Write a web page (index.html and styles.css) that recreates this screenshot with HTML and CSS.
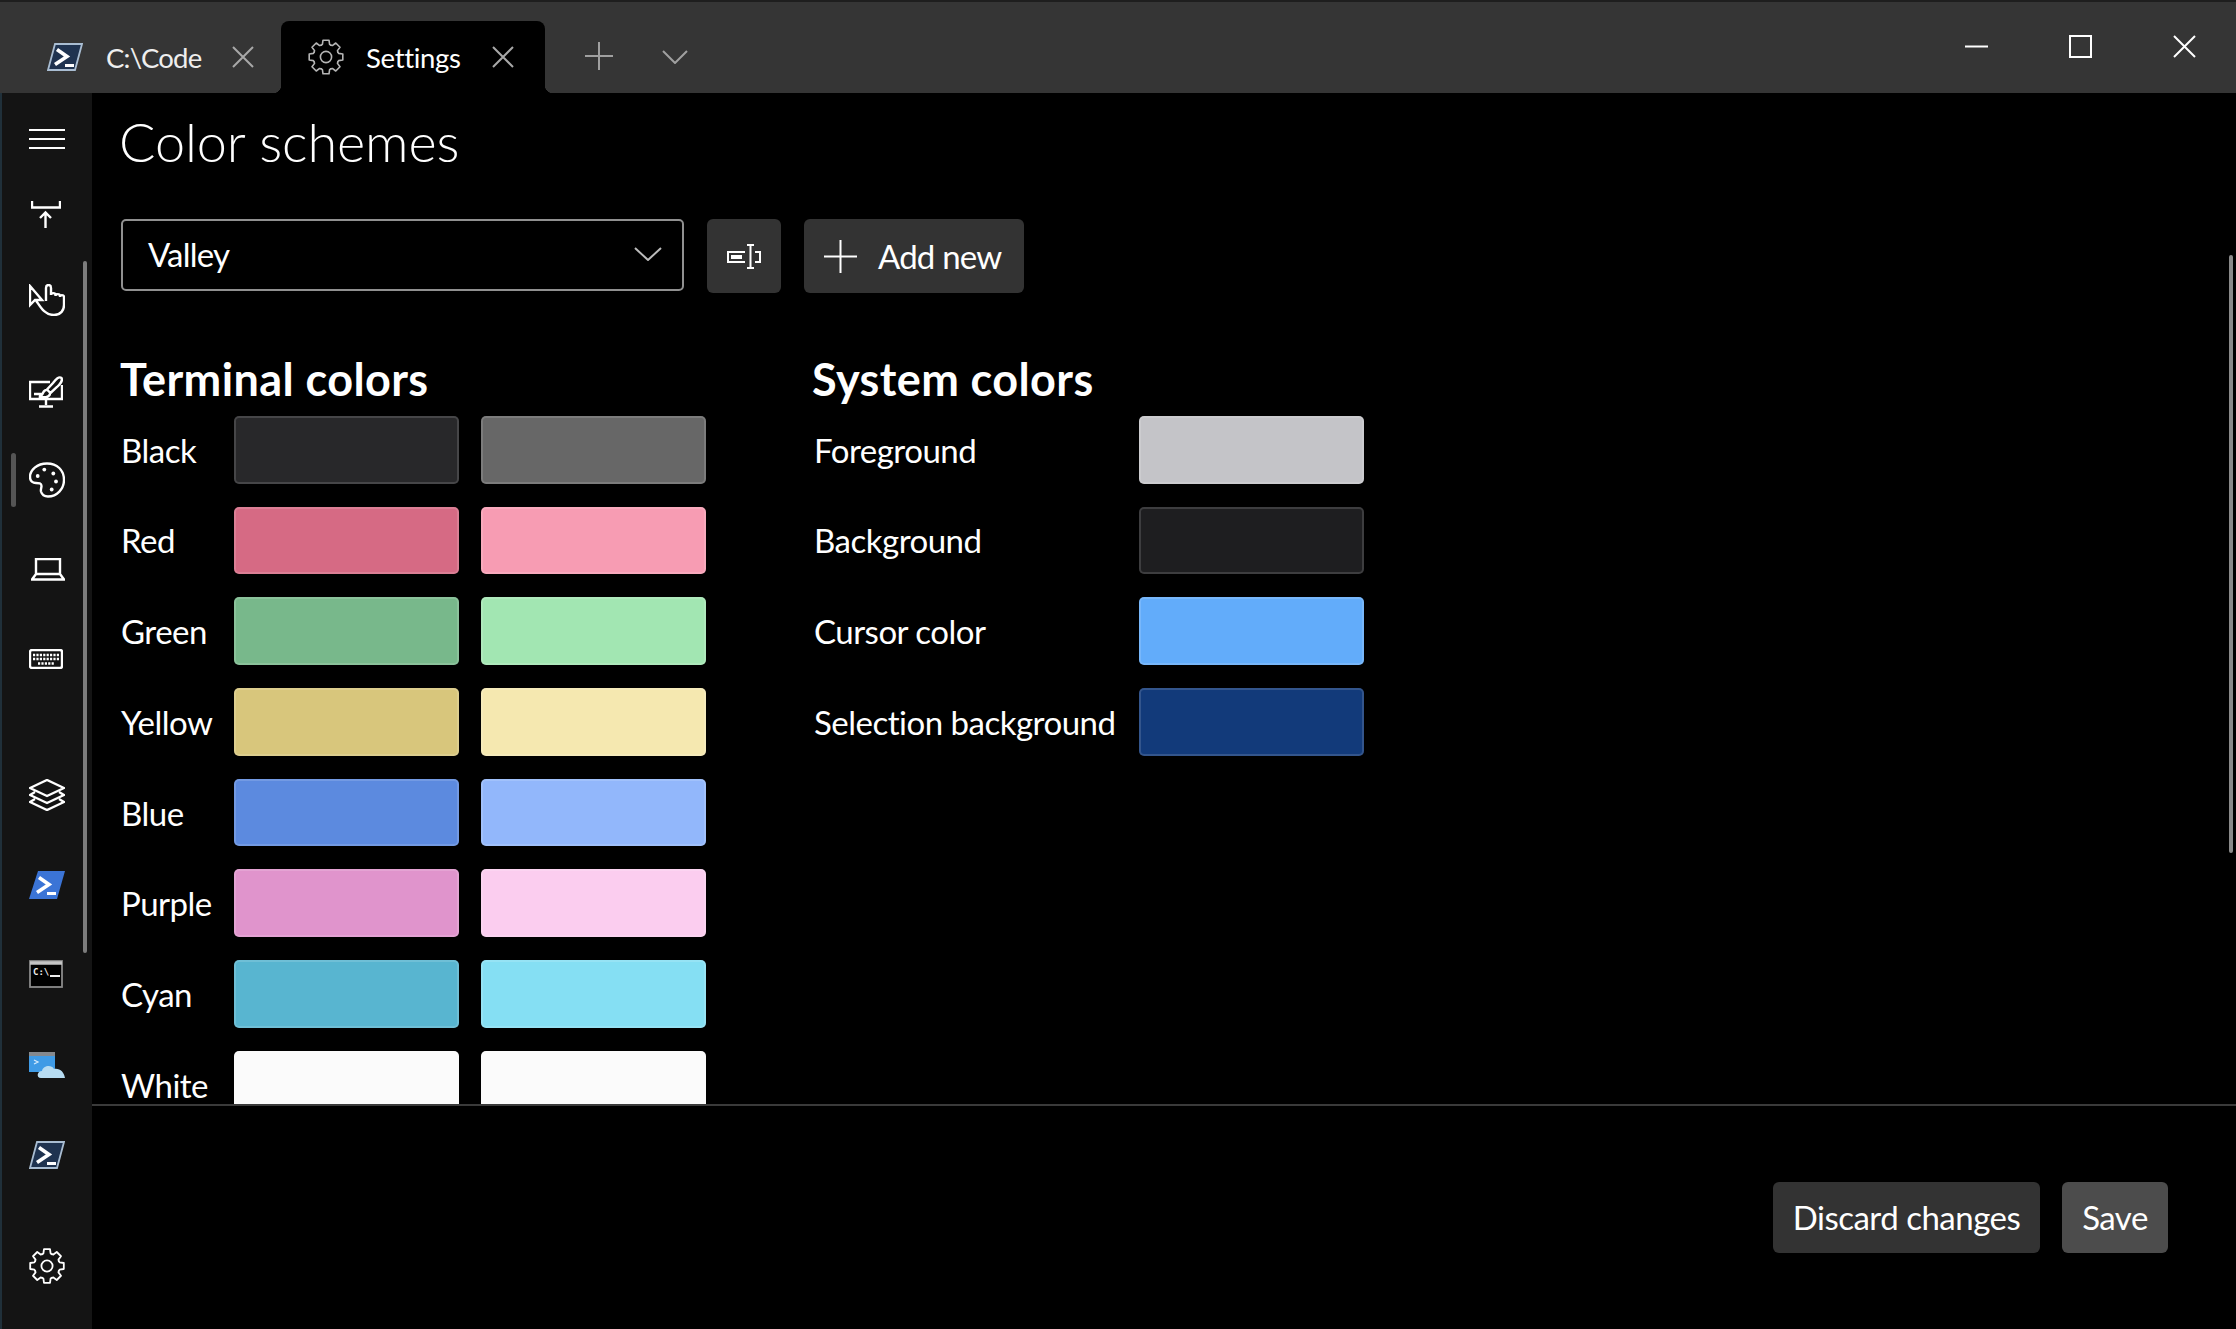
FILE: index.html
```html
<!DOCTYPE html>
<html lang="en">
<head>
    <meta charset="UTF-8">
    <title>Settings</title>
    <link rel="stylesheet" href="styles.css">
</head>
<body>
    <svg class="defs" width="0" height="0">
        <defs>
            <g id="tooth">
                <path d="M-4.9 -11.8 L-3.6 -12.6 L-3 -16.8 L3 -16.8 L3.6 -12.6 L4.9 -11.8"/>
            </g>
            <g id="gear" fill="none" stroke-linejoin="round" stroke-linecap="round">
                <g transform="translate(18 18)">
                    <use href="#tooth"/>
                    <use href="#tooth" transform="rotate(45)"/>
                    <use href="#tooth" transform="rotate(90)"/>
                    <use href="#tooth" transform="rotate(135)"/>
                    <use href="#tooth" transform="rotate(180)"/>
                    <use href="#tooth" transform="rotate(225)"/>
                    <use href="#tooth" transform="rotate(270)"/>
                    <use href="#tooth" transform="rotate(315)"/>
                    <circle r="5.6"/>
                </g>
            </g>
            <g id="ps-dark">
                <path d="M8 1 H35 L28 27 H1 Z" fill="#1f3350" stroke="#a9bdd2" stroke-width="1.8"/>
                <path d="M10 6.500 L20 13.500 L8 21.500" fill="none" stroke="#fff" stroke-width="3.600"/>
                <path d="M18 22.500 H27" stroke="#fff" stroke-width="3"/>
            </g>
        </defs>
    </svg>

    <header class="titlebar">
        <div class="tab">
            <svg class="tab-icon" viewBox="0 0 36 28" width="36" height="28"><use href="#ps-dark"/></svg>
            <span class="tab-title">C:\Code</span>
            <svg class="tab-close" viewBox="0 0 22 22" width="22" height="22"><path d="M1 1 L21 21 M21 1 L1 21"/></svg>
        </div>
        <div class="tab tab-active">
            <svg class="tab-gear" viewBox="0 0 36 36" width="36" height="36"><use href="#gear" stroke="#b5b5b5" stroke-width="1.6"/></svg>
            <span class="tab-title">Settings</span>
            <svg class="tab-close" viewBox="0 0 22 22" width="22" height="22"><path d="M1 1 L21 21 M21 1 L1 21"/></svg>
        </div>
        <svg class="new-tab" viewBox="0 0 28 28" width="28" height="28"><path d="M14 0 V28 M0 14 H28"/></svg>
        <svg class="tab-menu" viewBox="0 0 26 14" width="26" height="14"><path d="M1 1 L13 13 L25 1"/></svg>
        <div class="window-controls">
            <svg viewBox="0 0 23 23" width="23" height="23"><path d="M0 11.5 H23"/></svg>
            <svg viewBox="0 0 23 23" width="23" height="23"><rect x="1" y="1" width="21" height="21"/></svg>
            <svg viewBox="0 0 23 23" width="23" height="23"><path d="M1 1 L22 22 M22 1 L1 22"/></svg>
        </div>
    </header>

    <div class="main">
        <nav class="sidebar">
            <svg class="nav-icon nav-menu" viewBox="0 0 36 20" width="36" height="20"><path d="M0 1 H36 M0 10 H36 M0 19 H36"/></svg>
            <svg class="nav-icon nav-startup" viewBox="0 0 30 27" width="30" height="27"><path d="M1 0 V6.5 H29 V0 M14.5 27 V12 M9 17 L14.5 11.5 L20 17"/></svg>
            <svg class="nav-icon nav-interaction" viewBox="0 0 36 32" width="36" height="32"><path d="M1 2 V21 L6 16 L13 16 Z M7 16.500 C11 22 15 31 25 31 C32 31 35 26 35 21 V13 C35 10.500 31 10.500 31 13 V12 C31 9.500 26.500 9.500 26.500 12 V11 C26.500 8.500 22 8.500 22 11 V4 C22 0 17 0 17 4 V17"/></svg>
            <svg class="nav-icon nav-appearance" viewBox="0 0 34 32" width="34" height="32"><path d="M21 6 H1 V23 H33 V9 M17 23 V29 M10 30.500 H24 M5 18 H14 M32.500 2 C30 0 27 3 24 7 L18 13.500 L21.500 17 L28 11 C31 8 34 5 32.500 2 Z M17.500 14 C13 14 15 20 10 20.500 C14 22 21 21.500 21 17.500"/></svg>
            <svg class="nav-icon nav-schemes" viewBox="0 0 36 36" width="36" height="36"><path d="M18 1.500 C8 1.500 1 8 1 15 C1 19 4 21 7 21 C10 21 12.500 21 12.500 24 C12.500 26 11.500 27.500 12 29.500 C13 33 16 34.500 19 34.500 C28 34.500 35 27 35 18 C35 8 28 1.500 18 1.500 Z"/><g class="dots"><circle cx="8.700" cy="14" r="1.900"/><circle cx="15.300" cy="7.600" r="1.900"/><circle cx="24.300" cy="11.500" r="1.900"/><circle cx="27" cy="19.500" r="1.900"/><circle cx="22.700" cy="27.500" r="1.900"/></g></svg>
            <svg class="nav-icon nav-rendering" viewBox="0 0 34 23" width="34" height="23"><path d="M5 16 V1 H29 V16 Z M5 16 L1 21.500 H33 L29 16"/></svg>
            <svg class="nav-icon nav-actions" viewBox="0 0 34 20" width="34" height="20"><rect x="1" y="1" width="32" height="18" rx="2"/><path class="keys" d="M4 6 H30 M4 10 H30 M9 14.500 H25"/></svg>
            <svg class="nav-icon nav-defaults" viewBox="0 0 36 32" width="36" height="32"><path d="M18 1 L35 9 L18 17 L1 9 Z M6 13 L1 16 L18 24 L35 16 L30 13 M6 20 L1 23 L18 31 L35 23 L30 20"/></svg>
            <svg class="nav-ps" viewBox="0 0 36 28" width="36" height="28"><path d="M9 0 H36 L28 28 H0 Z" fill="#3b74d6"/><path d="M10 6.500 L20 13.500 L8 21.500" fill="none" stroke="#fff" stroke-width="3.600"/><path d="M18 22.500 H27" stroke="#fff" stroke-width="3"/></svg>
            <svg class="nav-cmd" viewBox="0 0 34 28" width="34" height="28"><rect x="1" y="1" width="32" height="26" fill="#000" stroke="#8a8a8a" stroke-width="1.800"/><path d="M1 3 H33" stroke="#c4c4c4" stroke-width="3.500"/><text x="4" y="15" class="cmd-text">C:\</text><path d="M21 16 H31" stroke="#eee" stroke-width="2"/></svg>
            <svg class="nav-azure" viewBox="0 0 36 26" width="36" height="26"><path d="M0 0 H26 V20 H0 Z" fill="#85898e"/><path d="M0 4 H26 V20 H0 Z" fill="#3f9be6"/><path d="M5 8 L9 10 L5 12" fill="none" stroke="#d6ebfc" stroke-width="1.200"/><path d="M12 26 C7 26 8 19 13 19 C14 14 22 12 25 17 C31 16 35 20 36 26 Z" fill="#b7dcf2"/></svg>
            <svg class="nav-ps nav-ps-dark" viewBox="0 0 36 28" width="36" height="28"><use href="#ps-dark"/></svg>
            <svg class="nav-gear" viewBox="0 0 36 36" width="36" height="36"><use href="#gear" stroke="#fff" stroke-width="1.800"/></svg>
            <span class="nav-pill"></span>
            <span class="nav-scroll"></span>
        </nav>

        <section class="content">
            <div class="page">
                <h1 class="page-title">Color schemes</h1>
                <div class="scheme-row">
                    <div class="dropdown">
                        <span>Valley</span>
                        <svg viewBox="0 0 28 14" width="28" height="14"><path d="M1 1 L14 13 L27 1"/></svg>
                    </div>
                    <button class="btn btn-icon">
                        <svg viewBox="0 0 34 25" width="34" height="25"><path d="M18 8 H1 V18 H18 M28 8 H33 V18 H28 M20 1 H27 M23.500 1 V24 M20 24 H27"/><rect class="rename-fill" x="4" y="11" width="11" height="4"/></svg>
                    </button>
                    <button class="btn btn-add">
                        <svg viewBox="0 0 33 33" width="33" height="33"><path d="M16.500 0 V33 M0 16.500 H33"/></svg>
                        <span>Add new</span>
                    </button>
                </div>
                <div class="color-sections">
                    <div class="terminal-colors">
                        <h2 class="section-title">Terminal colors</h2>
                        <div class="color-grid">
                            <span class="color-label">Black</span><span class="swatch" style="background:#28282a"></span><span class="swatch" style="background:#676767"></span>
                            <span class="color-label">Red</span><span class="swatch" style="background:#d66a84"></span><span class="swatch" style="background:#f79cb3"></span>
                            <span class="color-label">Green</span><span class="swatch" style="background:#78b88b"></span><span class="swatch" style="background:#a2e6b2"></span>
                            <span class="color-label">Yellow</span><span class="swatch" style="background:#d8c67c"></span><span class="swatch" style="background:#f5e8b0"></span>
                            <span class="color-label">Blue</span><span class="swatch" style="background:#5c8adf"></span><span class="swatch" style="background:#92b7fb"></span>
                            <span class="color-label">Purple</span><span class="swatch" style="background:#e094cc"></span><span class="swatch" style="background:#fbcdef"></span>
                            <span class="color-label">Cyan</span><span class="swatch" style="background:#58b5d0"></span><span class="swatch" style="background:#85dff3"></span>
                            <span class="color-label">White</span><span class="swatch" style="background:#fbfbfb"></span><span class="swatch" style="background:#fbfbfb"></span>
                        </div>
                    </div>
                    <div class="system-colors">
                        <h2 class="section-title">System colors</h2>
                        <div class="color-grid system-grid">
                            <span class="color-label">Foreground</span><span class="swatch" style="background:#c4c4c8"></span>
                            <span class="color-label">Background</span><span class="swatch" style="background:#1e1e20"></span>
                            <span class="color-label">Cursor color</span><span class="swatch" style="background:#62acfa"></span>
                            <span class="color-label">Selection background</span><span class="swatch" style="background:#123a7a"></span>
                        </div>
                    </div>
                </div>
            </div>
            <footer class="footer">
                <button class="btn btn-discard">Discard changes</button>
                <button class="btn btn-save">Save</button>
            </footer>
            <span class="page-scroll"></span>
        </section>
    </div>
</body>
</html>
```

FILE: styles.css
```css
* {
    box-sizing: border-box;
}

body {
    margin: 0;
    width: 2236px;
    height: 1329px;
    overflow: hidden;
    display: flex;
    flex-direction: column;
    background-color: #000;
    color: #fff;
    font-family: Lato, "Noto Sans", sans-serif;
    font-size: 33px;
    letter-spacing: -0.5px;
}

.defs {
    position: absolute;
}

svg {
    display: block;
    flex: none;
}

/* barra de titulo */
.titlebar {
    height: 93px;
    display: flex;
    align-items: flex-end;
    background-color: #353535;
    border-top: 2px solid #1e1e1e;
}

.tab {
    height: 72px;
    width: 281px;
    padding-left: 47px;
    display: flex;
    align-items: center;
    font-size: 27.5px;
    letter-spacing: -0.8px;
    color: #eee;
}

.tab-title {
    margin-left: 23px;
    width: 126px;
}

.tab-close {
    fill: none;
    stroke: #a8a8a8;
    stroke-width: 2;
}

.tab-active {
    position: relative;
    width: 264px;
    padding-left: 27px;
    background-color: #000;
    border-radius: 8px 8px 0 0;
    letter-spacing: -0.3px;
    color: #fff;
}

.tab-active .tab-title {
    margin-left: 22px;
}

/* esquinas invertidas de la pestana activa */
.tab-active::before,
.tab-active::after {
    content: "";
    position: absolute;
    bottom: 0;
    width: 8px;
    height: 8px;
}

.tab-active::before {
    left: -8px;
    background: radial-gradient(circle at 0 0, #353535 8px, #000 8.5px);
}

.tab-active::after {
    right: -8px;
    background: radial-gradient(circle at 100% 0, #353535 8px, #000 8.5px);
}

.new-tab {
    margin: 0 0 23px 40px;
    fill: none;
    stroke: #a0a0a0;
    stroke-width: 2;
}

.tab-menu {
    margin: 0 0 29px 49px;
    fill: none;
    stroke: #a0a0a0;
    stroke-width: 2;
}

.window-controls {
    margin-left: auto;
    align-self: flex-start;
    display: flex;
    gap: 81px;
    padding: 33px 40px 0 0;
}

.window-controls svg {
    fill: none;
    stroke: #fff;
    stroke-width: 2;
}

.main {
    position: relative;
    flex: 1;
    display: flex;
    min-height: 0;
}

/* menu lateral */
.sidebar {
    position: relative;
    width: 92px;
    display: flex;
    flex-direction: column;
    align-items: flex-start;
    padding: 36px 0 45px 27px;
    background-color: #141414;
    border-left: 2px solid #20303a;
}

.nav-icon {
    fill: none;
    stroke: #fff;
    stroke-width: 2.4;
}

.nav-menu {
    stroke-width: 2;
}

.nav-icon .dots {
    fill: #fff;
    stroke: none;
}

.nav-icon .keys {
    stroke-dasharray: 2.2 1.2;
    stroke-width: 2.4;
}

.nav-startup { margin: 52px 0 0 2px; }
.nav-interaction { margin-top: 56px; }
.nav-appearance { margin-top: 60px; }
.nav-schemes { margin-top: 54px; }
.nav-rendering { margin: 60px 0 0 2px; }
.nav-actions { margin-top: 68px; }
.nav-defaults { margin-top: 110px; }
.nav-ps { margin-top: 60px; }
.nav-cmd { margin-top: 61px; }
.nav-azure { margin-top: 64px; }
.nav-ps-dark { margin-top: 63px; }
.nav-gear { margin-top: auto; }

.cmd-text {
    font-family: "DejaVu Sans Mono", monospace;
    font-size: 9px;
    font-weight: 700;
    letter-spacing: 0;
    fill: #eee;
}

.nav-pill {
    position: absolute;
    left: 9px;
    top: 360px;
    width: 5px;
    height: 54px;
    border-radius: 3px;
    background-color: #555;
}

.nav-scroll {
    position: absolute;
    left: 81px;
    top: 168px;
    width: 4px;
    height: 692px;
    border-radius: 2px;
    background-color: #7c7c7c;
}

/* contenido */
.content {
    flex: 1;
    display: flex;
    flex-direction: column;
    min-width: 0;
}

.page {
    height: 1011px;
    overflow: hidden;
    padding-left: 28px;
}

.page-title {
    margin: 0 0 0 -1px;
    height: 126px;
    padding-top: 13px;
    font-size: 54px;
    font-weight: 300;
    letter-spacing: -0.1px;
    line-height: 72px;
}

.scheme-row {
    display: flex;
    align-items: flex-start;
}

.dropdown {
    width: 563px;
    height: 72px;
    margin-left: 1px;
    padding: 0 20px 2px 25px;
    display: flex;
    align-items: center;
    justify-content: space-between;
    border: 2.5px solid #909090;
    border-radius: 5px;
    letter-spacing: -0.8px;
}

.dropdown svg {
    fill: none;
    stroke: #bbb;
    stroke-width: 2;
}

.btn {
    border: none;
    border-radius: 6px;
    background-color: #333;
    color: #fff;
    font: inherit;
    letter-spacing: inherit;
    padding: 0;
}

.btn-icon {
    width: 74px;
    height: 74px;
    margin-left: 23px;
    display: flex;
    align-items: center;
    justify-content: center;
}

.btn-icon svg {
    fill: none;
    stroke: #fff;
    stroke-width: 2;
}

.btn-icon .rename-fill {
    fill: #fff;
    stroke: none;
}

.btn-add {
    width: 220px;
    height: 74px;
    margin-left: 23px;
    padding-left: 20px;
    display: flex;
    align-items: center;
    gap: 21px;
    letter-spacing: -0.8px;
}

.btn-add svg {
    fill: none;
    stroke: #fff;
    stroke-width: 2;
}

.color-sections {
    display: flex;
    margin-top: 57px;
}

.terminal-colors {
    width: 693px;
}

.section-title {
    margin: 0 0 7px;
    height: 59px;
    font-size: 45px;
    font-weight: 700;
    letter-spacing: 0.4px;
    line-height: 59px;
}

.system-colors .section-title {
    margin-left: -1px;
}

.color-grid {
    display: grid;
    grid-template-columns: 90px 225px 225px;
    grid-auto-rows: 67.5px;
    column-gap: 22px;
    row-gap: 23.2px;
    align-items: center;
    padding-left: 1px;
}

.color-label {
    white-space: nowrap;
    line-height: 34px;
    margin-right: -1px;
}

.system-grid {
    grid-template-columns: 303px 225px;
}

.terminal-colors .color-grid {
    grid-template-columns: 91px 225px 225px;
}

.swatch {
    height: 100%;
    border-radius: 5px;
    box-shadow: inset 0 0 0 2px rgba(255, 255, 255, 0.14);
}

.footer {
    height: 225px;
    display: flex;
    justify-content: flex-end;
    gap: 22px;
    padding: 76px 68px 0 0;
    border-top: 2px solid #3a3a3a;
}

.footer .btn {
    height: 71px;
    padding-bottom: 2px;
}

.btn-discard {
    width: 267px;
}

.btn-save {
    width: 106px;
    background-color: #4c4c4c;
}

.page-scroll {
    position: absolute;
    right: 3px;
    top: 162px;
    width: 4px;
    height: 598px;
    border-radius: 2px;
    background-color: #8a8a8a;
}
```
